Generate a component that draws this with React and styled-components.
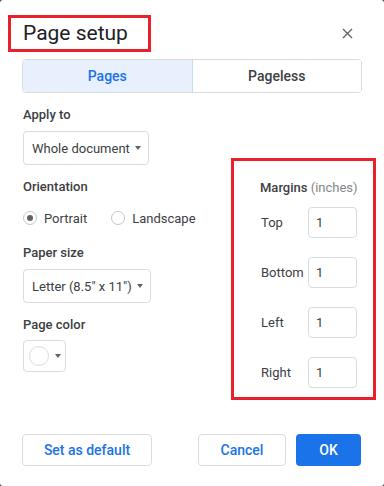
import React, { useState } from "react";
import styled, { createGlobalStyle } from "styled-components";

const GlobalStyle = createGlobalStyle`
  html, body {
    margin: 0;
    padding: 0;
    background: #3c3c3c;
  }
  * {
    box-sizing: border-box;
  }
`;

// Dialog shell
const Dialog = styled.div`
  width: 384px;
  height: 486px;
  background: #fff;
  border-radius: 3px;
  display: flex;
  flex-direction: column;
  font-family: Roboto, "Liberation Sans", Arial, sans-serif;
  color: #3c4043;
`;

const TitleRow = styled.div`
  display: flex;
  align-items: center;
  justify-content: space-between;
  padding: 15px 27px 0 8px;
`;

const Title = styled.h1`
  margin: 0;
  width: 143px;
  height: 37px;
  border: 3px solid #e8202a;
  padding-left: 12px;
  font-family: Roboto, sans-serif;
  font-size: 21px;
  font-weight: 400;
  line-height: 30px;
  color: #202124;
  white-space: nowrap;
`;

const CloseButton = styled.button`
  width: 20px;
  height: 20px;
  border: none;
  background: none;
  padding: 0;
  display: flex;
  align-items: center;
  justify-content: center;
  cursor: pointer;
`;

const Tabs = styled.div`
  display: flex;
  margin: 7px 22px 0 22px;
  height: 34px;
  border: 1px solid #dadce0;
  border-radius: 4px;
  overflow: hidden;
`;

const Tab = styled.button`
  flex: 1;
  border: none;
  border-left: ${(p) => (p.$first ? "none" : "1px solid #c6dafc")};
  background: ${(p) => (p.$active ? "#e8f0fe" : "#fff")};
  color: ${(p) => (p.$active ? "#1a73e8" : "#3c4043")};
  font-family: inherit;
  font-size: 14px;
  font-weight: 500;
  cursor: pointer;
`;

const Content = styled.div`
  padding: 0 8px 0 23px;
`;

const Label = styled.div`
  font-size: 13px;
  line-height: 16px;
  font-weight: 500;
  color: #3c4043;
  margin-top: ${(p) => p.$top || 0}px;
  white-space: nowrap;
`;

const Muted = styled.span`
  font-weight: 400;
  color: #80868b;
`;

const Select = styled.div`
  display: inline-flex;
  align-items: center;
  gap: 5px;
  height: 34px;
  margin-top: 8px;
  padding: 0 7px 0 8px;
  border: 1px solid #dadce0;
  border-radius: 4px;
  font-size: 13px;
  color: #3c4043;
  white-space: nowrap;
`;

const Caret = styled.span`
  width: 0;
  height: 0;
  border-left: 3.5px solid transparent;
  border-right: 3.5px solid transparent;
  border-top: 4px solid #5f6368;
`;

const Columns = styled.div`
  display: flex;
  justify-content: space-between;
  align-items: flex-start;
  margin-top: -7px;
`;

const LeftColumn = styled.div`
  display: flex;
  flex-direction: column;
  align-items: flex-start;
  padding-top: 21px;
`;

const RadioRow = styled.div`
  display: flex;
  align-items: center;
  height: 20px;
  margin-top: 13px;
  font-size: 13px;
`;

const RadioOption = styled.label`
  display: flex;
  align-items: center;
  gap: 7px;
  margin-right: 24px;
  cursor: pointer;
`;

const RadioCircle = styled.span`
  width: 14px;
  height: 14px;
  border-radius: 50%;
  border: 1px solid #c4c7c5;
  display: flex;
  align-items: center;
  justify-content: center;
  &::after {
    content: "";
    width: 6px;
    height: 6px;
    border-radius: 50%;
    background: ${(p) => (p.$checked ? "#5f6368" : "transparent")};
  }
`;

const ColorBox = styled.div`
  display: flex;
  align-items: center;
  gap: 6px;
  width: 43px;
  height: 32px;
  margin-top: 7px;
  padding-left: 5px;
  border: 1px solid #dadce0;
  border-radius: 4px;
`;

const Swatch = styled.span`
  width: 20px;
  height: 20px;
  border-radius: 50%;
  border: 1px solid #dadce0;
  background: #fff;
`;

const MarginsBox = styled.div`
  width: 145px;
  height: 242px;
  border: 3px solid #e8202a;
  padding: 19px 14px 0 26px;
  display: flex;
  flex-direction: column;
`;

const MarginRow = styled.div`
  display: flex;
  align-items: center;
  margin-top: ${(p) => p.$top}px;
  font-size: 13px;
`;

const MarginLabel = styled.span`
  width: 48px;
  padding-left: 1px;
`;

const MarginInput = styled.div`
  width: 49px;
  height: 31px;
  border: 1px solid #dadce0;
  border-radius: 4px;
  padding-left: 7px;
  display: flex;
  align-items: center;
  font-size: 13px;
`;

const Footer = styled.div`
  margin-top: auto;
  display: flex;
  align-items: center;
  padding: 0 23px 20px 22px;
  gap: 10px;
`;

const Button = styled.button`
  height: 32px;
  width: ${(p) => p.$width}px;
  border-radius: 4px;
  border: ${(p) => (p.$primary ? "none" : "1px solid #dadce0")};
  background: ${(p) => (p.$primary ? "#1a73e8" : "#fff")};
  color: ${(p) => (p.$primary ? "#fff" : "#1a73e8")};
  font-family: inherit;
  font-size: 14px;
  font-weight: 500;
  cursor: pointer;
  margin-left: ${(p) => (p.$push ? "auto" : "0")};
`;

const margins = [
  { label: "Top", top: 11 },
  { label: "Bottom", top: 19 },
  { label: "Left", top: 19 },
  { label: "Right", top: 19 },
];

export default function App() {
  const [mode, setMode] = useState("pages");
  const [orientation, setOrientation] = useState("portrait");

  return (
    <>
      <GlobalStyle />
      <Dialog>
        <TitleRow>
          <Title>Page setup</Title>
          <CloseButton aria-label="Close">
            <svg width="11" height="11" viewBox="0 0 11 11">
              <path d="M1 1L10 10M10 1L1 10" stroke="#5f6368" strokeWidth="1.4" />
            </svg>
          </CloseButton>
        </TitleRow>

        <Tabs>
          <Tab $first $active={mode === "pages"} onClick={() => setMode("pages")}>
            Pages
          </Tab>
          <Tab $active={mode === "pageless"} onClick={() => setMode("pageless")}>
            Pageless
          </Tab>
        </Tabs>

        <Content>
          <Label $top={14}>Apply to</Label>
          <Select>
            Whole document <Caret />
          </Select>

          <Columns>
            <LeftColumn>
              <Label>Orientation</Label>
              <RadioRow>
                <RadioOption onClick={() => setOrientation("portrait")}>
                  <RadioCircle $checked={orientation === "portrait"} />
                  Portrait
                </RadioOption>
                <RadioOption onClick={() => setOrientation("landscape")}>
                  <RadioCircle $checked={orientation === "landscape"} />
                  Landscape
                </RadioOption>
              </RadioRow>

              <Label $top={17}>Paper size</Label>
              <Select>
                Letter (8.5" x 11") <Caret />
              </Select>

              <Label $top={14}>Page color</Label>
              <ColorBox>
                <Swatch />
                <Caret />
              </ColorBox>
            </LeftColumn>

            <MarginsBox>
              <Label>
                Margins <Muted>(inches)</Muted>
              </Label>
              {margins.map((m) => (
                <MarginRow key={m.label} $top={m.top}>
                  <MarginLabel>{m.label}</MarginLabel>
                  <MarginInput>1</MarginInput>
                </MarginRow>
              ))}
            </MarginsBox>
          </Columns>
        </Content>

        <Footer>
          <Button $width={130}>Set as default</Button>
          <Button $width={88} $push>
            Cancel
          </Button>
          <Button $width={65} $primary>
            OK
          </Button>
        </Footer>
      </Dialog>
    </>
  );
}
